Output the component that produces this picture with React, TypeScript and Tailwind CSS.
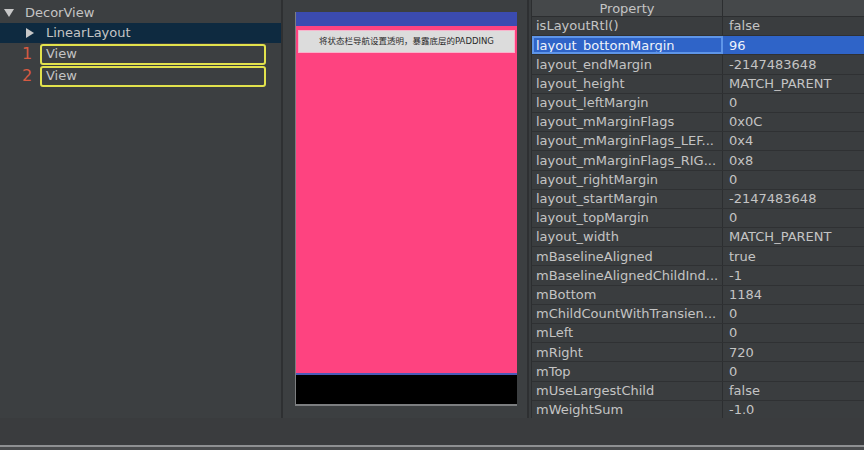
const props: [string, string][] = [
  ["isLayoutRtl()", "false"],
  ["layout_bottomMargin", "96"],
  ["layout_endMargin", "-2147483648"],
  ["layout_height", "MATCH_PARENT"],
  ["layout_leftMargin", "0"],
  ["layout_mMarginFlags", "0x0C"],
  ["layout_mMarginFlags_LEF...", "0x4"],
  ["layout_mMarginFlags_RIG...", "0x8"],
  ["layout_rightMargin", "0"],
  ["layout_startMargin", "-2147483648"],
  ["layout_topMargin", "0"],
  ["layout_width", "MATCH_PARENT"],
  ["mBaselineAligned", "true"],
  ["mBaselineAlignedChildInd...", "-1"],
  ["mBottom", "1184"],
  ["mChildCountWithTransien...", "0"],
  ["mLeft", "0"],
  ["mRight", "720"],
  ["mTop", "0"],
  ["mUseLargestChild", "false"],
  ["mWeightSum", "-1.0"],
];

const Tri = ({ down }: { down?: boolean }) => (
  <svg width="10" height="10" viewBox="0 0 10 10" className="shrink-0">
    {down ? <path d="M0 1 L10 1 L5 9 Z" fill="#c8c8c8" /> : <path d="M1 0 L9 5 L1 10 Z" fill="#c8c8c8" />}
  </svg>
);

export default function App() {
  return (
    <div
      className="w-[864px] h-[450px] bg-[#3c3f41] flex flex-col overflow-hidden text-[#c4c4c4]"
      style={{ fontFamily: '"DejaVu Sans", "Noto Sans CJK SC", sans-serif' }}
    >
      <div className="flex h-[418px]">
        {/* tree */}
        <div className="w-[283px] border-r-2 border-[#2e3032] pt-[3px] text-[13px]">
          <div className="h-[19px] flex items-center gap-[11px] pl-[4px]">
            <Tri down />
            <span>DecorView</span>
          </div>
          <div className="h-[20px] mt-[1px] bg-[#0e2a40] flex items-center gap-[11px] pl-[25px]">
            <Tri />
            <span>LinearLayout</span>
          </div>
          {["1", "2"].map((n) => (
            <div key={n} className="h-[22px] flex items-center">
              <span className="w-[40px] pl-[22px] text-[16px] text-[#d65a42]">{n}</span>
              <div className="w-[226px] h-[21px] border-2 border-[#e2e24c] rounded-[3px] flex items-center pl-[4px]">
                View
              </div>
            </div>
          ))}
        </div>

        {/* preview */}
        <div className="w-[246px] border-r-2 border-[#2e3032] pl-[12px] pt-[12px]">
          <div className="w-[222px] h-[394px] flex flex-col border-l border-b-2 border-[#7c7e80]">
            <div className="h-[14px] bg-[#3b4bb0]" />
            <div className="flex-1 bg-[#fe4380] pt-[4px] px-[2px] border-b-2 border-[#4a5bb8]">
              <div className="h-[23px] bg-[#dcdcdc] border border-[#f8b4cc] flex items-center justify-center text-[8.5px] text-[#2a2a2a]">
                将状态栏导航设置透明，暴露底层的PADDING
              </div>
            </div>
            <div className="h-[29px] bg-black" />
          </div>
        </div>

        {/* properties */}
        <div className="flex-1 bg-[#3a3d3f] pl-[2px] text-[13px]">
          <div className="h-[17px] flex border-l border-[#2c2e30] bg-[#45484a] border-b border-b-[#2c2e30]">
            <div className="w-[191px] text-center leading-[17px] border-r border-[#2c2e30]">Property</div>
            <div className="flex-1" />
          </div>
          {props.map(([k, v], i) => {
            const sel = i === 1;
            return (
              <div
                key={k}
                className={
                  "h-[19.2px] flex border-l border-[#2c2e30] border-b border-b-[#2f3133] " +
                  (sel ? "bg-[#2f64c8]" : "")
                }
              >
                <div
                  className={
                    "w-[191px] flex items-center whitespace-nowrap overflow-hidden " +
                    (sel ? "border-2 border-[#5e95e8] pl-[2px] text-[#eef3fb]" : "pl-[4px] border-r border-[#2c2e30]")
                  }
                >
                  {k}
                </div>
                <div className={"flex-1 flex items-center pl-[6px] " + (sel ? "text-[#eef3fb]" : "")}>{v}</div>
              </div>
            );
          })}
        </div>
      </div>
      <div className="h-[27px] bg-[#3a3c3e]" />
      <div className="h-[2px] bg-[#8e9092]" />
      <div className="flex-1 bg-[#4a4c4e]" />
    </div>
  );
}
